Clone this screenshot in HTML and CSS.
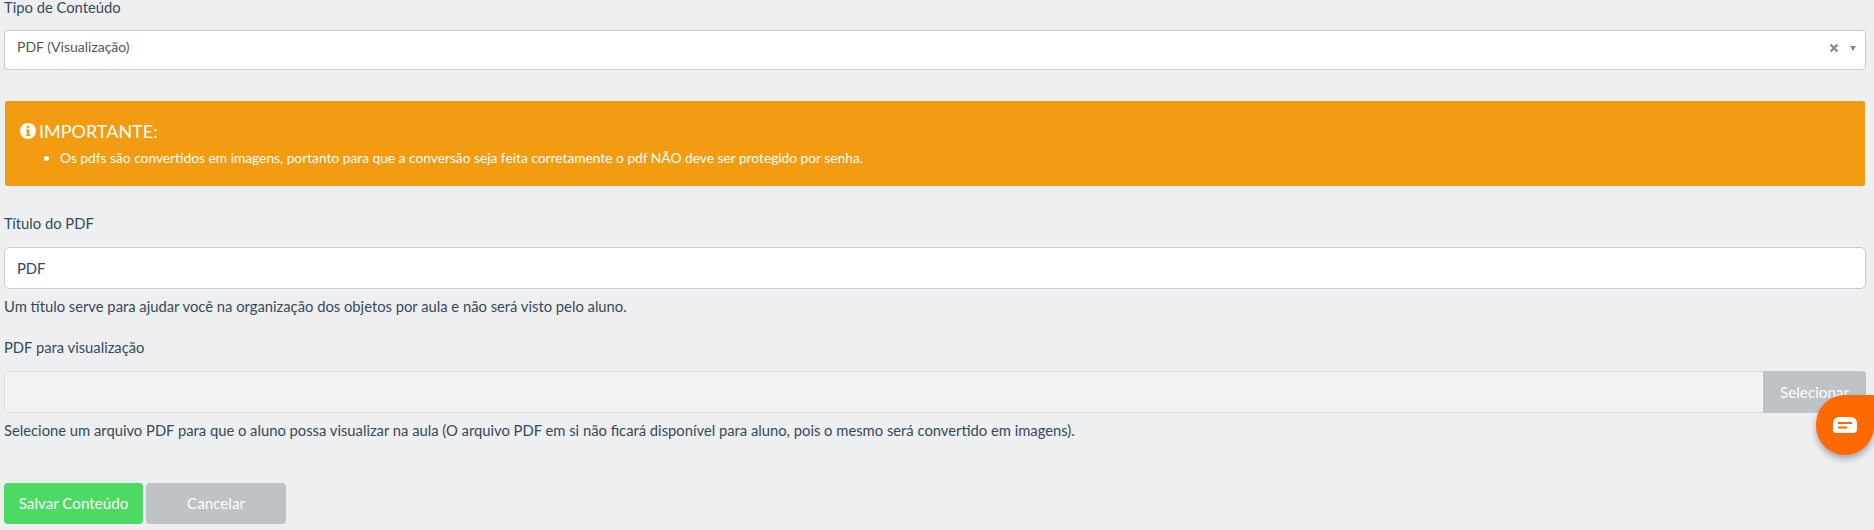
FILE: index.html
```html
<!DOCTYPE html>
<html lang="pt-BR">
<head>
<meta charset="utf-8">
<title>Tipo de Conteúdo</title>
<link rel="stylesheet" href="styles.css">
</head>
<body>
<main class="form">
  <label class="label label-first">Tipo de Conteúdo</label>
  <div class="select">
    <span class="select-value">PDF (Visualização)</span>
    <span class="select-clear">
      <svg width="10" height="10" viewBox="0 0 10 10"><path d="M1.500 1.500l7 7M8.500 1.500l-7 7" stroke="#888" stroke-width="2.200" fill="none"/></svg>
    </span>
    <span class="select-arrow"></span>
  </div>
  <section class="alert">
    <h4 class="alert-title">
      <svg class="alert-icon" width="16" height="16" viewBox="0 0 16 16"><circle cx="8" cy="8" r="8" fill="#fff"/><rect x="6.800" y="2.800" width="2.600" height="2.400" fill="#f39c12"/><path d="M5.900 6.400h3.500v5h1v1.500H5.900v-1.500h1V7.900h-1z" fill="#f39c12"/></svg>
      <span>IMPORTANTE:</span>
    </h4>
    <ul class="alert-list">
      <li>Os pdfs são convertidos em imagens, portanto para que a conversão seja feita corretamente o pdf NÃO deve ser protegido por senha.</li>
    </ul>
  </section>
  <label class="label label-title">Título do PDF</label>
  <div class="input">PDF</div>
  <p class="help">Um título serve para ajudar você na organização dos objetos por aula e não será visto pelo aluno.</p>
  <label class="label label-file">PDF para visualização</label>
  <div class="file">
    <div class="file-name"></div>
    <div class="file-btn">Selecionar</div>
  </div>
  <p class="help">Selecione um arquivo PDF para que o aluno possa visualizar na aula (O arquivo PDF em si não ficará disponível para aluno, pois o mesmo será convertido em imagens).</p>
  <div class="actions">
    <button class="btn btn-save">Salvar Conteúdo</button>
    <button class="btn btn-cancel">Cancelar</button>
  </div>
</main>
<div class="chat">
  <svg width="24" height="17" viewBox="0 0 24 17"><path d="M6 0h12a6 6 0 0 1 6 6v6a4 4 0 0 1-4 4H3a3 3 0 0 1-3-3V6a6 6 0 0 1 6-6z" fill="#fff"/><rect x="5" y="5" width="14" height="2" fill="#ff6a00"/><rect x="5" y="9.500" width="9" height="2" fill="#ff6a00"/></svg>
</div>
</body>
</html>
```

FILE: styles.css
```css
html, body {
  margin: 0;
  height: 530px;
  overflow: hidden;
  background: #eeeff1;
}
body {
  font-family: "Lato", "Liberation Sans", sans-serif;
  font-size: 14.770px;
  line-height: 20px;
  color: #34495e;
  position: relative;
}
.form {
  display: flex;
  flex-direction: column;
  padding: 0 8px 0 4px;
}
.label {
  display: block;
  height: 20px;
}
.label-first {
  margin-top: -3px;
  margin-bottom: 13px;
}
.label-title {
  margin-top: 27px;
  margin-bottom: 14px;
}
.label-file {
  margin-top: 21px;
  margin-bottom: 14px;
}
.select {
  display: flex;
  align-items: center;
  height: 40px;
  box-sizing: border-box;
  background: #fff;
  border: 1px solid #c9cbcf;
  border-radius: 4px;
  padding: 0 9px 0 12px;
  margin-bottom: 31px;
  font-size: 14px;
  color: #555;
}
.select-value {
  flex: 1;
  position: relative;
  top: -3px;
}
.select-clear {
  display: flex;
  position: relative;
  top: -2px;
  margin-right: 11px;
}
.select-arrow {
  position: relative;
  top: -2px;
  width: 0;
  height: 0;
  border-left: 3.500px solid transparent;
  border-right: 3.500px solid transparent;
  border-top: 5px solid #888;
}
.alert {
  height: 85px;
  margin: 0 1px;
  box-sizing: border-box;
  background: #f39c12;
  border-radius: 2px;
  color: #fff;
  padding: 19px 15px 0;
}
.alert-title {
  display: flex;
  align-items: center;
  gap: 3px;
  margin: 0;
  font-size: 18px;
  font-weight: 400;
  line-height: 22px;
}
.alert-icon {
  flex: none;
}
.alert-list {
  margin: 7px 0 0;
  padding-left: 40px;
  font-size: 13.750px;
  line-height: 18px;
}
.input {
  height: 42px;
  box-sizing: border-box;
  background: #fff;
  border: 1px solid #c9cbcf;
  border-radius: 5px;
  padding: 0 12px;
  line-height: 40px;
}
.help {
  margin: 7px 0 0;
  height: 20px;
}
.file {
  display: flex;
  height: 42px;
  box-sizing: border-box;
  border: 1px solid #dcdee0;
  border-right: 0;
  border-radius: 5px;
  background: #f2f3f5;
}
.file-name {
  flex: 1;
}
.file-btn {
  width: 103px;
  margin: -1px 0;
  background: #bdc3c7;
  color: #fff;
  text-align: center;
  line-height: 42px;
  border-radius: 0 4px 4px 0;
  font-size: 15.200px;
}
.actions {
  display: flex;
  gap: 3px;
  margin-top: 43px;
}
.btn {
  width: 140px;
  height: 41px;
  border: 0;
  border-radius: 4px;
  color: #fff;
  font: 15.200px/41px "Lato", "Liberation Sans", sans-serif;
  padding: 0;
}
.btn-save {
  width: 139px;
  background: #4cd964;
}
.btn-cancel {
  background: #bdc3c7;
}
.chat {
  position: absolute;
  left: 1816px;
  top: 395px;
  width: 58px;
  height: 60px;
  background: #ff6a00;
  border-radius: 30px 0 30px 30px;
  box-shadow: 0 4px 6px rgba(0,0,0,.3);
  display: flex;
  align-items: center;
  justify-content: center;
}
```
